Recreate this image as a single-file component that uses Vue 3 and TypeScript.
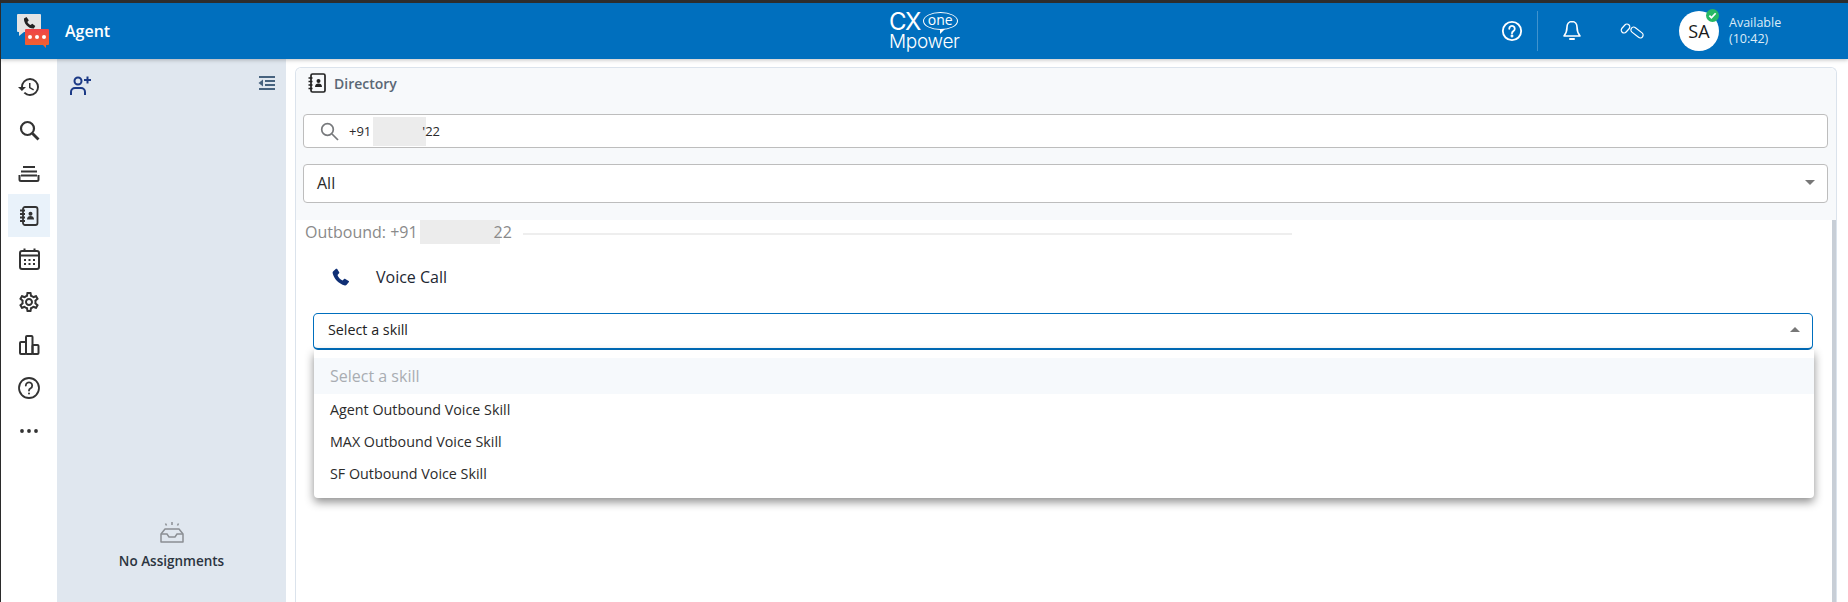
<script setup lang="ts">
import { ref } from "vue";

const skills = ref(["Agent Outbound Voice Skill", "MAX Outbound Voice Skill", "SF Outbound Voice Skill"]);
</script>

<template>
	<div class="page">
		<header class="topbar">
			<div class="brand">
				<svg class="logo" width="36" height="36" viewBox="0 0 36 36">
					<defs>
						<linearGradient id="redbubble" x1="0" y1="0" x2="0" y2="1">
							<stop offset="0" stop-color="#ee4449" />
							<stop offset="1" stop-color="#f2662c" />
						</linearGradient>
					</defs>
					<path d="M1 1h22a1 1 0 0 1 1 1v16a1 1 0 0 1-1 1H7l-5 4v-4H1a1 1 0 0 1-1-1V2a1 1 0 0 1 1-1z" fill="#e4e4e4" />
					<path d="M9 16h22a1 1 0 0 1 1 1v14a1 1 0 0 1-1 1h-2v3l-3-3H9a1 1 0 0 1-1-1V17a1 1 0 0 1 1-1z" fill="url(#redbubble)" />
					<circle cx="13" cy="24" r="2" fill="#fff" /><circle cx="20" cy="24" r="2" fill="#fff" /><circle cx="27" cy="24" r="2" fill="#fff" />
					<path d="M7 5.500L9.500 4l2.300 3.200-1.400 1.800c.6 1.400 1.700 2.500 3.100 3.100l1.800-1.400 3 2.300-1.500 2.500c-5 .5-10.500-5-9.800-10.500z" fill="#222" />
				</svg>
				<span class="title">Agent</span>
			</div>
			<div class="product">
				<div class="cx-row">
					<span class="cx">CX</span>
					<span class="one">one<i class="tail"></i></span>
				</div>
				<div class="mpower">Mpower</div>
			</div>
			<div class="actions">
				<svg class="act" width="22" height="22" viewBox="0 0 24 24" fill="none" stroke="#fff" stroke-width="2">
					<circle cx="12" cy="12" r="10" />
					<path d="M9 9.500a3 3 0 1 1 4.500 2.600c-1 .6-1.500 1.100-1.500 2.400" stroke-linecap="round" />
					<circle cx="12" cy="17.500" r=".6" fill="#fff" />
				</svg>
				<div class="sep"></div>
				<svg class="act bell" width="20" height="22" viewBox="0 0 20 22" fill="none" stroke="#fff" stroke-width="1.600">
					<path d="M10 1.500c-3.300 0-5 2.700-5 5.500 0 4-1 6.500-3 9h16c-2-2.500-3-5-3-9 0-2.800-1.700-5.500-5-5.500z" stroke-linejoin="round" />
					<path d="M8 19h4" stroke-width="2" stroke-linecap="round" />
				</svg>
				<svg class="act link" width="26" height="18" viewBox="0 0 26 18" fill="none" stroke="#fff" stroke-width="1.200">
					<rect x="-5" y="-2.800" width="10" height="5.600" rx="2.800" transform="translate(6.500 6.500) rotate(-48)" />
					<rect x="-7" y="-2.800" width="14" height="5.600" rx="2.800" transform="translate(18 10.500) rotate(38)" />
				</svg>
				<div class="avatar">
					SA
					<span class="badge">
						<svg width="9" height="9" viewBox="0 0 10 10" fill="none" stroke="#fff" stroke-width="2"><path d="M1.500 5.200l2.300 2.300 4.700-5" /></svg>
					</span>
				</div>
				<div class="state">Available<br />(10:42)</div>
			</div>
		</header>

		<div class="body">
			<nav class="rail">
				<div class="rail-item">
					<svg width="24" height="24" viewBox="0 0 24 24" fill="#333"><path d="M13 3a9 9 0 0 0-9 9H1l3.890 3.890.07.14L9 12H6c0-3.870 3.130-7 7-7s7 3.130 7 7-3.130 7-7 7c-1.930 0-3.680-.79-4.940-2.060l-1.420 1.420A8.954 8.954 0 0 0 13 21a9 9 0 0 0 0-18zm-1 5v5l4.280 2.540.72-1.210-3.500-2.080V8H12z" /></svg>
				</div>
				<div class="rail-item">
					<svg width="24" height="24" viewBox="0 0 24 24" fill="none" stroke="#333" stroke-width="2.200"><circle cx="10.500" cy="10.500" r="6.500" /><path d="M15.500 15.500l6 6" stroke-width="2.800" /></svg>
				</div>
				<div class="rail-item">
					<svg width="24" height="24" viewBox="0 0 24 24" fill="none" stroke="#333" stroke-width="2"><path d="M6 6h12M4 10.500h16M4 14.500h16" /><path d="M2.500 14v4.500a1.500 1.500 0 0 0 1.500 1.500h16a1.500 1.500 0 0 0 1.500-1.500V14" /></svg>
				</div>
				<div class="rail-item active">
					<svg width="24" height="24" viewBox="0 0 24 24" fill="none" stroke="#333" stroke-width="1.800">
						<rect x="6" y="3" width="14.500" height="18" rx="2" />
						<path d="M3 6.500h5M3 10h5M3 13.500h5M3 17h5" />
						<circle cx="13.500" cy="9.800" r="2" fill="#333" stroke="none" /><path d="M10 15.500c0-2.500 1.500-3.500 3.500-3.500s3.500 1 3.500 3.500z" fill="#333" stroke="none" />
					</svg>
				</div>
				<div class="rail-item">
					<svg width="24" height="24" viewBox="0 0 24 24" fill="none" stroke="#333" stroke-width="2">
						<rect x="3" y="4" width="19" height="18" rx="2" />
						<path d="M3 8.500h19M7.500 1.500v3M17.500 1.500v3" />
						<g fill="#333" stroke="none"><rect x="7" y="12" width="2" height="2" /><rect x="11.500" y="12" width="2" height="2" /><rect x="16" y="12" width="2" height="2" /><rect x="7" y="16" width="2" height="2" /><rect x="11.500" y="16" width="2" height="2" /><rect x="16" y="16" width="2" height="2" /></g>
					</svg>
				</div>
				<div class="rail-item">
					<svg width="24" height="24" viewBox="0 0 24 24" fill="#333"><path d="M19.430 12.980c.04-.32.07-.64.07-.98s-.03-.66-.07-.98l2.110-1.650c.19-.15.24-.42.12-.64l-2-3.460c-.12-.22-.39-.3-.61-.22l-2.490 1c-.52-.4-1.080-.73-1.690-.98l-.38-2.650A.488.488 0 0 0 14 2h-4c-.25 0-.46.180-.49.420l-.38 2.650c-.61.250-1.170.590-1.690.98l-2.490-1c-.23-.09-.49 0-.61.220l-2 3.460c-.13.220-.07.490.12.640l2.110 1.650c-.04.320-.07.650-.07.980s.03.660.07.980l-2.110 1.650c-.19.150-.24.420-.12.640l2 3.460c.12.220.39.300.61.220l2.490-1c.52.400 1.080.730 1.690.980l.38 2.650c.03.240.24.420.49.420h4c.25 0 .46-.18.49-.42l.38-2.650c.61-.25 1.170-.59 1.690-.98l2.490 1c.23.090.49 0 .61-.22l2-3.460c.12-.22.07-.49-.12-.64l-2.110-1.650zm-1.980-1.710c.04.310.05.520.05.730s-.02.430-.05.730l-.14 1.130.89.700 1.080.840-.7 1.210-1.270-.51-1.040-.42-.9.680c-.43.320-.84.560-1.250.730l-1.060.430-.16 1.130-.2 1.350h-1.400l-.19-1.350-.16-1.130-1.060-.43c-.43-.18-.83-.41-1.230-.71l-.91-.7-1.060.43-1.270.51-.7-1.210 1.080-.84.890-.7-.14-1.130c-.03-.31-.05-.54-.05-.74s.02-.43.05-.73l.14-1.130-.89-.7-1.080-.84.7-1.210 1.270.51 1.040.42.9-.68c.43-.32.84-.56 1.250-.73l1.060-.43.16-1.130.2-1.350h1.390l.19 1.350.16 1.130 1.060.43c.43.18.83.41 1.230.71l.91.7 1.060-.43 1.270-.51.7 1.210-1.070.85-.89.7.14 1.130zM12 8c-2.210 0-4 1.790-4 4s1.790 4 4 4 4-1.790 4-4-1.790-4-4-4zm0 6c-1.100 0-2-.9-2-2s.9-2 2-2 2 .9 2 2-.9 2-2 2z" /></svg>
				</div>
				<div class="rail-item">
					<svg width="24" height="24" viewBox="0 0 24 24" fill="none" stroke="#333" stroke-width="2" stroke-linejoin="round">
						<rect x="3" y="9" width="6" height="12" rx="1" />
						<rect x="9" y="3" width="6.500" height="18" rx="1" />
						<rect x="15.500" y="12" width="6" height="9" rx="1" />
					</svg>
				</div>
				<div class="rail-item">
					<svg width="24" height="24" viewBox="0 0 24 24" fill="none" stroke="#333" stroke-width="1.800">
						<circle cx="12" cy="12" r="10" />
						<path d="M8.800 9.500a3.200 3.200 0 1 1 4.800 2.800c-1.100.6-1.600 1.200-1.600 2.200" stroke-linecap="round" />
						<circle cx="12" cy="17.500" r="1" fill="#333" stroke="none" />
					</svg>
				</div>
				<div class="rail-item">
					<svg width="24" height="24" viewBox="0 0 24 24" fill="#333"><circle cx="5" cy="12" r="1.900" /><circle cx="12" cy="12" r="1.900" /><circle cx="19" cy="12" r="1.900" /></svg>
				</div>
			</nav>

			<aside class="panel">
				<div class="panel-top">
					<svg width="24" height="22" viewBox="0 0 24 22" fill="none" stroke="#1c3a86" stroke-width="2">
						<circle cx="9" cy="6" r="3.500" />
						<path d="M2 20v-3a4 4 0 0 1 4-4h6a4 4 0 0 1 4 4v3" />
						<path d="M15 5h7M18.500 1.500v7" />
					</svg>
					<svg width="18" height="16" viewBox="0 0 18 16" fill="#47637f">
						<rect x="1" y="1" width="16" height="2" /><rect x="7" y="5" width="10" height="2" /><rect x="7" y="9" width="10" height="2" /><rect x="1" y="13" width="16" height="2" />
						<path d="M5 4.500v7L0.500 8z" />
					</svg>
				</div>
				<div class="empty">
					<svg width="26" height="24" viewBox="0 0 26 24" fill="none" stroke="#8b8f94" stroke-width="1.500">
						<path d="M2 13l4-5h14l4 5v8H2z" stroke-linejoin="round" />
						<path d="M2 13h6l2 3h6l2-3h6" />
						<path d="M13 1v3M6.500 2.500l1 2M19.500 2.500l-1 2" />
					</svg>
					<div class="empty-text">No Assignments</div>
				</div>
			</aside>

			<main class="main">
				<section class="card">
					<div class="card-head">
						<div class="card-title">
							<svg width="18" height="20" viewBox="0 0 18 20" fill="none" stroke="#222" stroke-width="1.700">
								<rect x="3" y="1" width="14" height="18" rx="1.500" />
								<path d="M0.500 5h4M0.500 8.500h4M0.500 12h4M0.500 15.500h4" />
								<circle cx="10.500" cy="8" r="2" fill="#222" stroke="none" /><path d="M7 14c0-2.500 1.500-3.500 3.500-3.500S14 11.500 14 14z" fill="#222" stroke="none" />
							</svg>
							<span>Directory</span>
						</div>
						<div class="search">
							<svg width="19" height="19" viewBox="0 0 19 19" fill="none" stroke="#77797c" stroke-width="1.700"><circle cx="7.500" cy="7.500" r="5.800" /><path d="M12 12l6 6" /></svg>
							<span class="search-text">+91<span class="mask mask-a"></span>'22</span>
						</div>
						<div class="filter">
							<span>All</span>
							<i class="caret down"></i>
						</div>
					</div>
					<div class="scroll">
						<div class="outbound">
							<span class="outbound-text">Outbound: +91<span class="mask mask-b"></span>22</span>
							<span class="rule"></span>
						</div>
						<div class="voice">
							<svg width="18" height="18" viewBox="0 0 18 18" fill="#0f2f75"><path d="M1 3.500L4 .8c.4-.3.9-.2 1.200.2l2 3.200c.2.400.2.800-.1 1.100L5.500 6.900c.8 2.300 2.600 4.400 5 5.700l1.600-1.600c.3-.3.800-.4 1.200-.1l3.400 2c.4.300.5.800.2 1.200l-2.500 2.900c-.4.400-1 .6-1.500.4C6.500 15.800 1.800 10.500.6 5c-.1-.5.100-1.100.4-1.500z" /></svg>
							<span>Voice Call</span>
						</div>
						<div class="skill-wrap">
							<div class="skill">
								<span>Select a skill</span>
								<i class="caret up"></i>
							</div>
							<ul class="menu">
								<li class="placeholder">Select a skill</li>
								<li v-for="s in skills" :key="s">{{ s }}</li>
							</ul>
						</div>
						<div class="scrollbar"></div>
					</div>
				</section>
			</main>
		</div>
	</div>
</template>

<style>
html,
body {
	margin: 0;
	padding: 0;
	overflow: hidden;
	background: #fff;
}
</style>

<style scoped>
.page {
	width: 1848px;
	height: 602px;
	display: flex;
	flex-direction: column;
	overflow: hidden;
	font-family: "Open Sans", "Liberation Sans", sans-serif;
	box-sizing: border-box;
	border-left: 1px solid #2b2b2b;
}
.topbar {
	height: 59px;
	flex: none;
	box-sizing: border-box;
	border-top: 3px solid #2d2d2d;
	margin-left: -1px;
	background: #006fbe;
	display: flex;
	align-items: center;
	justify-content: space-between;
	position: relative;
	z-index: 2;
	box-shadow: 0 1px 4px rgba(0, 0, 0, 0.25);
}
.brand {
	display: flex;
	align-items: center;
	padding-left: 17px;
	width: 400px;
}
.logo {
	flex: none;
}
.title {
	margin-left: 12px;
	font-size: 16px;
	font-weight: 600;
	color: #fff;
}
.product {
	width: 70px;
	margin-right: 48px;
	color: #fff;
	display: flex;
	flex-direction: column;
	align-items: flex-start;
	line-height: 1;
}
.cx-row {
	display: flex;
	align-items: center;
}
.cx {
	font-size: 24px;
	font-weight: 400;
	font-family: "Inter", sans-serif;
	letter-spacing: -1.500px;
	line-height: 21px;
}
.one {
	position: relative;
	box-sizing: border-box;
	width: 35px;
	height: 18px;
	border: 1.300px solid #fff;
	border-radius: 50%;
	font-size: 14px;
	line-height: 14px;
	text-align: center;
	margin-left: 3px;
}
.tail {
	position: absolute;
	left: 16px;
	bottom: -5px;
	width: 0;
	height: 0;
	border-top: 5px solid #fff;
	border-right: 5px solid transparent;
}
.mpower {
	font-size: 19px;
	line-height: 20px;
	font-weight: 300;
	font-family: "Inter", sans-serif;
	letter-spacing: -0.300px;
}
.actions {
	display: flex;
	align-items: center;
	width: 369px;
	flex: none;
	box-sizing: border-box;
	padding-left: 22px;
}
.sep {
	width: 1px;
	height: 40px;
	background: rgba(255, 255, 255, 0.25);
	margin: 0 24px 0 14px;
}
.link {
	margin-left: 37px;
}
.avatar {
	width: 40px;
	height: 40px;
	border-radius: 50%;
	background: #fff;
	color: #1a1a1a;
	font-size: 18px;
	display: flex;
	align-items: center;
	justify-content: center;
	margin-left: 34px;
	position: relative;
}
.badge {
	position: absolute;
	top: -2px;
	right: 0;
	width: 13px;
	height: 13px;
	border-radius: 50%;
	background: #27b864;
	display: flex;
	align-items: center;
	justify-content: center;
}
.state {
	margin-left: 10px;
	font-size: 12.500px;
	line-height: 16px;
	color: #dcebf7;
}
.body {
	flex: 1;
	display: flex;
	min-height: 0;
}
.rail {
	width: 56px;
	flex: none;
	background: #fff;
	display: flex;
	flex-direction: column;
	padding-top: 6px;
	box-sizing: border-box;
}
.rail-item {
	height: 43px;
	width: 42px;
	margin-left: 7px;
	display: flex;
	align-items: center;
	justify-content: center;
}
.rail-item.active {
	background: #e9f2fa;
}
.panel {
	width: 229px;
	flex: none;
	background: #e0e7ef;
	display: flex;
	flex-direction: column;
	box-sizing: border-box;
}
.panel-top {
	display: flex;
	justify-content: space-between;
	align-items: flex-start;
	padding: 16px 10px 0 12px;
}
.empty {
	margin-top: auto;
	padding-bottom: 32px;
	display: flex;
	flex-direction: column;
	align-items: center;
	gap: 7px;
}
.empty-text {
	font-size: 13.500px;
	font-weight: 600;
	color: #2b3440;
}
.main {
	flex: 1;
	min-width: 0;
	padding: 8px 11px 0 9px;
	background: #fff;
}
.card {
	height: 100%;
	box-sizing: border-box;
	border: 1px solid #dbe3ec;
	border-bottom: 0;
	border-radius: 6px 6px 0 0;
	display: flex;
	flex-direction: column;
}
.card-head {
	background: #f7f9fb;
	height: 152px;
	flex: none;
	box-sizing: border-box;
	padding: 0 8px 0 7px;
	border-radius: 6px 6px 0 0;
}
.card-title {
	display: flex;
	align-items: center;
	gap: 8px;
	height: 30px;
	margin: 0 0 16px 5px;
	font-size: 14px;
	font-weight: 600;
	color: #5b6875;
}
.search {
	height: 34px;
	box-sizing: border-box;
	border: 1px solid #bdbdbd;
	border-radius: 4px;
	background: #fff;
	display: flex;
	align-items: center;
	padding-left: 16px;
	gap: 10px;
}
.search-text {
	font-size: 13px;
	color: #2a2a2a;
	display: flex;
	align-items: center;
}
.mask {
	display: inline-block;
	background: #ececec;
}
.mask-a {
	width: 53px;
	height: 29px;
	margin: 0 -4px 0 2px;
}
.mask-b {
	width: 80px;
	height: 24px;
	margin: 0 -6px 0 2px;
}
.filter {
	margin-top: 16px;
	height: 39px;
	box-sizing: border-box;
	border: 1px solid #bdbdbd;
	border-radius: 4px;
	background: #fff;
	display: flex;
	align-items: center;
	justify-content: space-between;
	padding: 0 12px 2px 13px;
	font-size: 16px;
	color: #2a2a2a;
}
.caret {
	width: 0;
	height: 0;
	border-left: 5px solid transparent;
	border-right: 5px solid transparent;
}
.caret.down {
	border-top: 5px solid #777;
}
.caret.up {
	border-bottom: 5px solid #777;
}
.scroll {
	flex: 1;
	position: relative;
	background: #fff;
	padding: 0 23px 0 17px;
	min-height: 0;
}
.outbound {
	display: flex;
	align-items: center;
	height: 24px;
	margin: 0 -8px;
}
.outbound-text {
	display: flex;
	align-items: center;
	font-size: 16px;
	color: #8a8a8a;
	white-space: nowrap;
}
.rule {
	margin-left: 11px;
	width: 769px;
	height: 2px;
	background: #eeeeee;
	margin-top: 3px;
}
.voice {
	display: flex;
	align-items: center;
	gap: 26px;
	margin-top: 21px;
	height: 24px;
	padding-left: 19px;
	font-size: 16px;
	color: #1d2733;
}
.skill-wrap {
	margin-top: 24px;
	position: relative;
}
.skill {
	height: 37px;
	box-sizing: border-box;
	border: 1.500px solid #006fbe;
	border-bottom-width: 2px;
	border-radius: 5px;
	background: #fff;
	display: flex;
	align-items: center;
	justify-content: space-between;
	padding: 0 12px 3px 14px;
	font-size: 14.300px;
	color: #222;
}
.menu {
	position: absolute;
	z-index: 3;
	left: 1px;
	right: -1px;
	top: 37px;
	margin: 0;
	padding: 8px 0;
	list-style: none;
	background: #fff;
	border-radius: 0 0 4px 4px;
	box-shadow: 0 4px 10px rgba(0, 0, 0, 0.45);
}
.menu li {
	height: 32px;
	line-height: 32px;
	padding-left: 16px;
	font-size: 14.300px;
	color: #2b2b2b;
}
.menu .placeholder {
	height: 36px;
	line-height: 36px;
	background: #f6f9fc;
	font-size: 16px;
	color: #a9adb2;
}
.scrollbar {
	position: absolute;
	right: 0;
	top: 0;
	bottom: 0;
	width: 4px;
	background: #c8ced6;
}
</style>
